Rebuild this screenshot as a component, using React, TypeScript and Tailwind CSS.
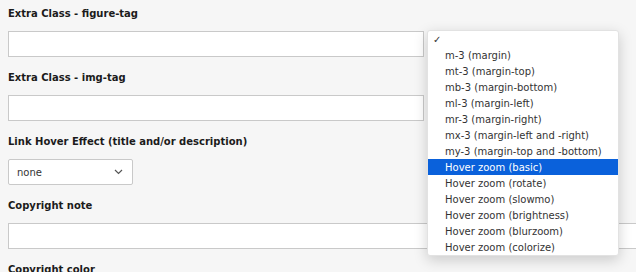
import React from 'react';

const hoverOptions = [
  '',
  'm-3 (margin)',
  'mt-3 (margin-top)',
  'mb-3 (margin-bottom)',
  'ml-3 (margin-left)',
  'mr-3 (margin-right)',
  'mx-3 (margin-left and -right)',
  'my-3 (margin-top and -bottom)',
  'Hover zoom (basic)',
  'Hover zoom (rotate)',
  'Hover zoom (slowmo)',
  'Hover zoom (brightness)',
  'Hover zoom (blurzoom)',
  'Hover zoom (colorize)'
];

function Label({ children }: { children: React.ReactNode }) {
  return <div className="mb-[9px] pt-px text-[10px] leading-4 font-bold text-[#1b1b1b]">{children}</div>;
}

function TextInput({ className }: { className: string }) {
  return <div className={`h-[26px] border border-[#c9c9c9] bg-white ${className}`} />;
}

export default function App() {
  return (
    <div className="relative h-[272px] w-[636px] overflow-hidden bg-[#f6f6f6] font-['DejaVu_Sans',sans-serif]">
      <div className="flex flex-col gap-3 px-2 pt-[5px]">
        <div>
          <Label>Extra Class - figure-tag</Label>
          <TextInput className="w-[416px]" />
        </div>
        <div>
          <Label>Extra Class - img-tag</Label>
          <TextInput className="w-[416px]" />
        </div>
        <div>
          <Label>Link Hover Effect (title and/or description)</Label>
          <div className="flex h-[26px] w-[125px] items-center justify-between rounded-[2px] border border-[#c9c9c9] bg-white pr-[9px] pl-2">
            <span className="text-[10px] text-[#333]">none</span>
            <svg width="9" height="6" viewBox="0 0 9 6" fill="none" stroke="#555" strokeWidth="1.2">
              <path d="M1 1l3.5 3.5L8 1" />
            </svg>
          </div>
        </div>
        <div>
          <Label>Copyright note</Label>
          <TextInput className="w-[640px]" />
        </div>
        <div>
          <Label>Copyright color</Label>
        </div>
      </div>

      <div className="absolute top-[30px] left-[427px] w-[192px] rounded-[3px] border border-[#e2e2e2] bg-white shadow-[0_4px_14px_rgba(0,0,0,0.18)]">
        {hoverOptions.map((opt, idx) => (
          <div
            key={idx}
            className={`flex h-4 items-center text-[10px] ${idx === 8 ? 'bg-[#0a61db] text-white' : 'text-[#333]'}`}
          >
            <span className="w-[17px] pl-[5px] text-[10px]">{idx === 0 ? '✓' : ''}</span>
            <span>{opt}</span>
          </div>
        ))}
      </div>
    </div>
  );
}
